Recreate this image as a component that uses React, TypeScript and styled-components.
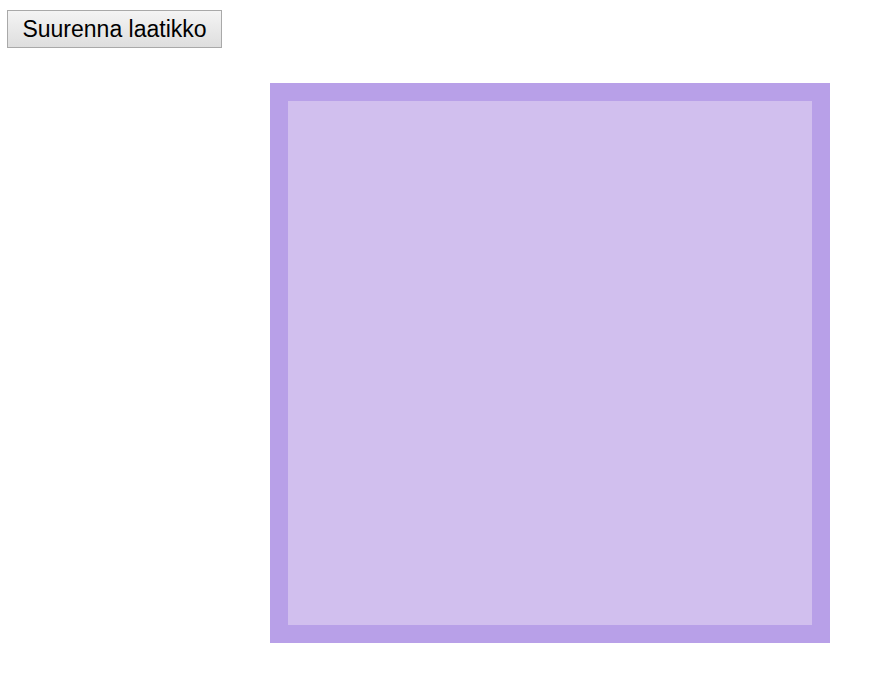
import React, { useState } from "react";
import styled, { createGlobalStyle } from "styled-components";

const Global = createGlobalStyle`
  html, body { margin: 0; padding: 0; background: #ffffff; }
  body { font-family: "Liberation Sans", Arial, sans-serif; }
`;

const Page = styled.div`
  display: flex;
  flex-direction: column;
  align-items: flex-start;
  padding: 10px 0 0 7px;
`;

const Button = styled.button`
  font-family: "Liberation Sans", Arial, sans-serif;
  font-size: 23px;
  line-height: 1;
  color: #000;
  height: 38px;
  width: 215px;
  padding: 0;
  border: 1px solid #a9a9a9;
  border-radius: 0;
  background: linear-gradient(#f4f4f4, #dedede);
  cursor: pointer;
`;

const Box = styled.div<{ $size: number }>`
  box-sizing: border-box;
  margin: 35px 0 0 263px;
  border: 18px solid #b8a0e8;
  background: #d1bfee;
`;

export default function App() {
  const [size, setSize] = useState(560);
  return (
    <>
      <Global />
      <Page>
        <Button onClick={() => setSize((s) => s + 20)}>Suurenna laatikko</Button>
        <Box $size={size} style={{ width: size, height: size }} />
      </Page>
    </>
  );
}
